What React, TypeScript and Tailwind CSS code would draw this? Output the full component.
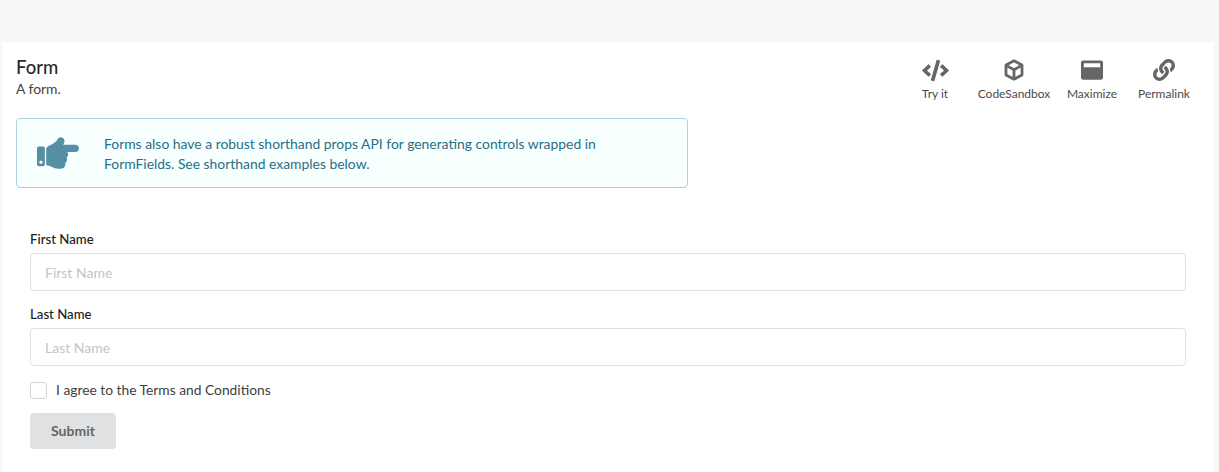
import { FaCode, FaHandPointRight, FaLink, FaWindowMaximize } from 'react-icons/fa'

function CubeIcon() {
  return (
    <svg width="20" height="22" viewBox="0 0 20 22" fill="none" stroke="currentColor" strokeWidth="2.8" strokeLinejoin="round">
      <path d="M10 1.8 18 6v10l-8 4.2L2 16V6z" />
      <path d="M2.6 6.6 10 10.8l7.4-4.2M10 10.8V20" />
    </svg>
  )
}

const actions = [
  { label: 'Try it', icon: <FaCode size={27} />, width: 'w-[84px]' },
  { label: 'CodeSandbox', icon: <CubeIcon />, width: 'w-[74px]' },
  { label: 'Maximize', icon: <FaWindowMaximize size={22} />, width: 'w-[82px]' },
  { label: 'Permalink', icon: <FaLink size={22} />, width: 'w-[62px]' },
]

function Field({ label }: { label: string }) {
  return (
    <div className="mb-[14px]">
      <label className="block text-[13.2px] leading-[19px] font-medium text-[#212121] mb-[4px]">{label}</label>
      <input
        type="text"
        placeholder={label}
        className="block w-full h-[38px] px-[14px] text-sm bg-white border border-[#dfdfe0] rounded-[4px] placeholder:text-[#c4c4c4] outline-none"
      />
    </div>
  )
}

export default function App() {
  return (
    <div className="h-[472px] overflow-hidden bg-[#f7f7f7] pt-[42px] pl-[2px] pr-[5px] font-['Lato',sans-serif] text-[#212121]">
      <div className="h-full bg-white">
        <div className="flex justify-between pl-[14px] pr-[19px] pt-[14px]">
          <div>
            <h1 className="text-[18.5px] leading-[22px] font-medium text-[#2a2a2a]">Form</h1>
            <p className="text-[13.9px] leading-[20px] mt-[1px] text-[#444]">A form.</p>
          </div>
          <div className="flex">
            {actions.map(a => (
              <div key={a.label} className={`${a.width} flex flex-col items-center text-[#666]`}>
                <div className="h-[28px] flex items-center justify-center">{a.icon}</div>
                <span className="mt-[2px] text-[12px] leading-[16px] text-[#4a4a4a] whitespace-nowrap">{a.label}</span>
              </div>
            ))}
          </div>
        </div>

        <div className="ml-[14px] mt-[16px] w-[672px] h-[70px] flex items-center bg-[#f8ffff] border border-[#a9d5de] rounded-[4px] text-[#276f86]">
          <FaHandPointRight size={42} className="ml-[20px] text-[#548fa3] shrink-0" />
          <p className="ml-[25px] mt-[1px] w-[530px] text-[13.9px] leading-[19.5px]">
            Forms also have a robust shorthand props API for generating controls wrapped in FormFields. See shorthand examples below.
          </p>
        </div>

        <form className="pl-[28px] pr-[28px] mt-[42px]">
          <Field label="First Name" />
          <Field label="Last Name" />
          <label className="flex items-center h-[18px] mt-[15px] mb-[14px] text-[13.8px] text-[#404040]">
            <span className="w-[17px] h-[17px] bg-white border border-[#d4d4d5] rounded-[3px] shrink-0" />
            <span className="ml-[9px]">I agree to the Terms and Conditions</span>
          </label>
          <button type="button" className="w-[86px] h-[36px] bg-[#e0e1e2] rounded-[4px] text-sm font-bold text-[#666]">
            Submit
          </button>
        </form>
      </div>
    </div>
  )
}
